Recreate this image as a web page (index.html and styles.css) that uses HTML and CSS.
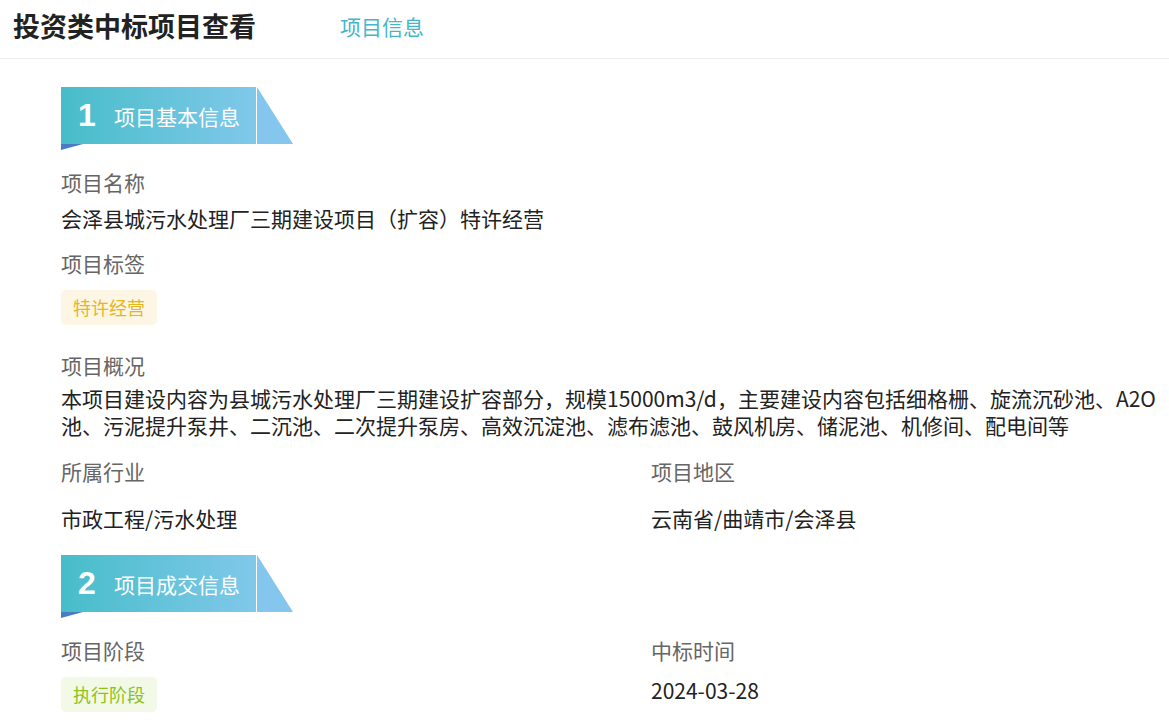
FILE: index.html
```html
<!DOCTYPE html>
<html lang="zh-CN">
<head>
    <meta charset="UTF-8">
    <meta name="viewport" content="width=device-width, initial-scale=1.0">
    <title>投资类中标项目查看</title>
    <link rel="stylesheet" href="styles.css">
</head>
<body>
    <div class="header">
        <h1 class="page-title">投资类中标项目查看</h1>
        <a class="tab active" href="#">项目信息</a>
    </div>

    <div class="content">
        <div class="section-head first">
            <div class="section-bar">
                <span class="section-num">1</span>
                <span class="section-name">项目基本信息</span>
            </div>
            <div class="section-tail"></div>
        </div>

        <div class="field">
            <div class="label">项目名称</div>
            <div class="value">会泽县城污水处理厂三期建设项目（扩容）特许经营</div>
        </div>

        <div class="field spaced">
            <div class="label">项目标签</div>
            <span class="tag yellow">特许经营</span>
        </div>

        <div class="field spaced-lg">
            <div class="label">项目概况</div>
            <div class="value desc">本项目建设内容为县城污水处理厂三期建设扩容部分，规模15000m3/d，主要建设内容包括细格栅、旋流沉砂池、A2O池、污泥提升泵井、二沉池、二次提升泵房、高效沉淀池、滤布滤池、鼓风机房、储泥池、机修间、配电间等</div>
        </div>

        <div class="row spaced-md">
            <div class="field">
                <div class="label">所属行业</div>
                <div class="value loose">市政工程/污水处理</div>
            </div>
            <div class="field">
                <div class="label">项目地区</div>
                <div class="value loose">云南省/曲靖市/会泽县</div>
            </div>
        </div>

        <div class="section-head">
            <div class="section-bar">
                <span class="section-num">2</span>
                <span class="section-name">项目成交信息</span>
            </div>
            <div class="section-tail"></div>
        </div>

        <div class="row">
            <div class="field">
                <div class="label">项目阶段</div>
                <span class="tag green">执行阶段</span>
            </div>
            <div class="field">
                <div class="label">中标时间</div>
                <div class="value date">2024-03-28</div>
            </div>
        </div>
    </div>
</body>
</html>
```

FILE: styles.css
```css
* {
    margin: 0;
    padding: 0;
    box-sizing: border-box;
}

body {
    background-color: #fff;
    font-family: "Noto Sans CJK SC", "Noto Sans", sans-serif;
    color: #222;
    overflow: hidden;
}

.header {
    display: flex;
    align-items: center;
    padding: 10px 13px 16px;
    border-bottom: 1px solid #ececec;
}

.page-title {
    font-size: 27px;
    line-height: 32px;
    font-weight: bold;
    color: #222;
}

.tab {
    margin-left: 84px;
    font-size: 21px;
    line-height: 32px;
    color: #45b6c9;
    text-decoration: none;
}

.content {
    padding: 0 0 0 61px;
}

.section-head {
    display: flex;
    position: relative;
    height: 57px;
    margin-top: 22px;
    margin-bottom: 23px;
}

.section-head.first {
    margin-top: 28px;
}

.section-bar {
    width: 195px;
    display: flex;
    align-items: center;
    padding-left: 17px;
    background: linear-gradient(90deg, #47bdc9, #80c8ea);
    color: #fff;
}

.section-bar::after {
    content: "";
    position: absolute;
    left: 0;
    top: 57px;
    width: 22px;
    height: 6px;
    background-color: #4a7cc3;
    clip-path: polygon(0 0, 100% 0, 0 100%);
}

.section-num {
    font-family: "Liberation Sans", Arial, sans-serif;
    font-weight: bold;
    font-size: 32px;
    width: 36px;
}

.section-name {
    font-size: 21px;
    line-height: 30px;
}

.section-tail {
    width: 36px;
    margin-left: 1px;
    background-color: #84c6ee;
    clip-path: polygon(0 0, 0 100%, 100% 100%);
}

.field.spaced {
    margin-top: 15px;
}

.field.spaced-lg {
    margin-top: 25px;
}

.row.spaced-md {
    margin-top: 17px;
}

.label {
    font-size: 21px;
    line-height: 30px;
    color: #666;
}

.value {
    font-size: 21px;
    line-height: 30px;
    color: #222;
    margin-top: 6px;
}

.value.desc {
    line-height: 27px;
    margin-top: 5px;
}

.value.loose {
    margin-top: 17px;
}

.value.date {
    margin-top: 10px;
}

.row {
    display: grid;
    grid-template-columns: 590px 1fr;
}

.tag {
    display: inline-block;
    margin-top: 12px;
    padding: 0 12px;
    height: 35px;
    line-height: 35px;
    font-size: 18px;
    border-radius: 5px;
}

.tag.yellow {
    color: #e9b41e;
    background-color: #fdf6e4;
}

.tag.green {
    color: #8cc21e;
    background-color: #f3f9e7;
}
```
